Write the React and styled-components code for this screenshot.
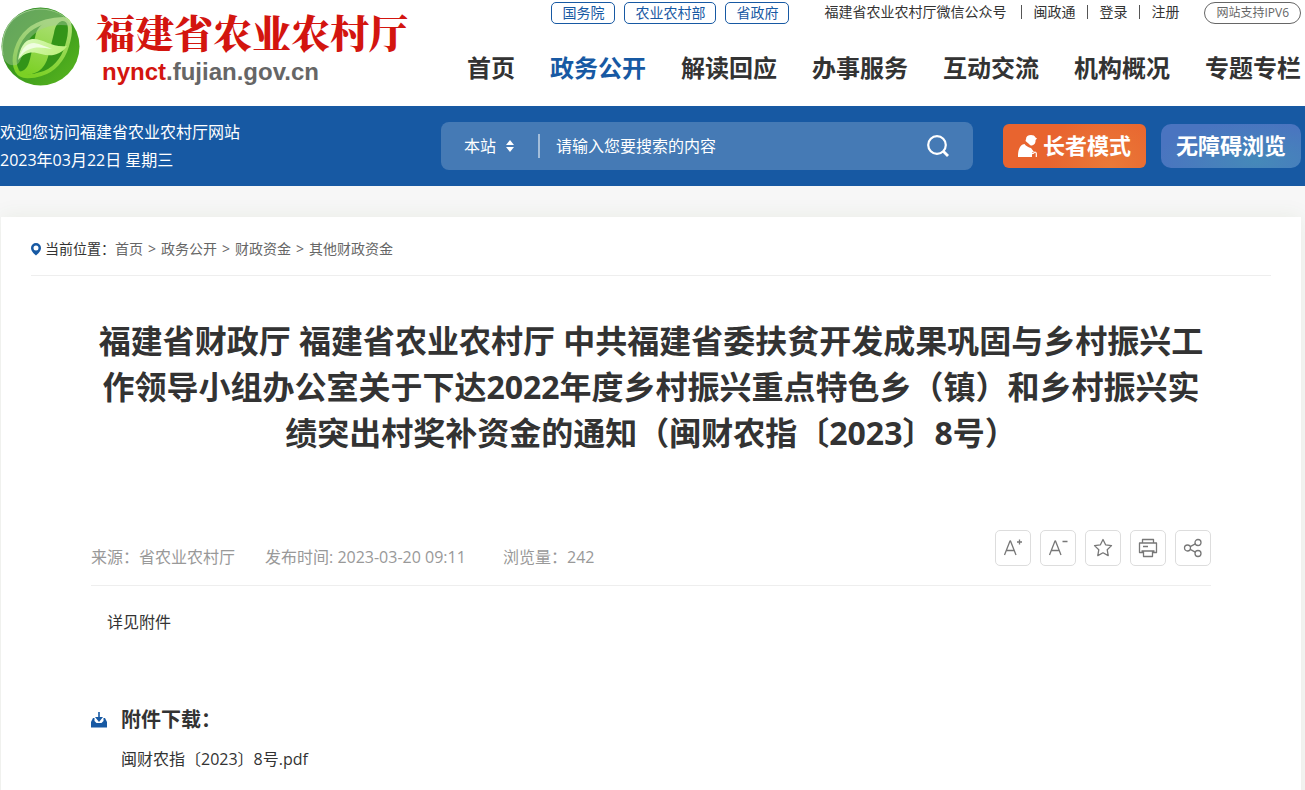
import React, { useState } from 'react';
import styled, { createGlobalStyle } from 'styled-components';

const officialLinks = ['国务院', '农业农村部', '省政府'];
const userLinks = ['福建省农业农村厅微信公众号', '闽政通', '登录', '注册'];
const navItems = ['首页', '政务公开', '解读回应', '办事服务', '互动交流', '机构概况', '专题专栏'];
const crumbs = ['首页', '政务公开', '财政资金', '其他财政资金'];

const Logo = () => (
  <svg width="80" height="80" viewBox="0 0 80 80" aria-hidden="true">
    <defs>
      <linearGradient id="ball" x1="0" y1="0" x2="1" y2="1">
        <stop offset="0" stopColor="#2b8427" />
        <stop offset="0.5" stopColor="#3a9a1c" />
        <stop offset="1" stopColor="#5cb81f" />
      </linearGradient>
      <linearGradient id="band" x1="0.6" y1="0" x2="0.3" y2="1">
        <stop offset="0" stopColor="#aadf72" />
        <stop offset="1" stopColor="#7bd024" />
      </linearGradient>
      <linearGradient id="leaf" x1="0" y1="0" x2="1" y2="0.4">
        <stop offset="0" stopColor="#dcfac0" />
        <stop offset="1" stopColor="#bdf07c" />
      </linearGradient>
    </defs>
    <circle cx="40.5" cy="39.5" r="39" fill="url(#ball)" />
    <path d="M18 60c-6-10 0-26 12-36 10-8 24-12 34-12 8 0 7 14 3 26-4 13-14 25-26 28-9 3-19 3-23-6Z" fill="#2f9217" opacity="0.7" />
    <path d="M17 64c-6-12 0-31 12-41 10-8 24-11 34-11 9 0 8 14 4 27-4 14-14 25-26 28-9 3-20 4-24-3Z" fill="none" stroke="url(#band)" strokeWidth="4" />
    <path d="M36 26c4-9 12-15 28-13-7 2-9 7-10 13l-6 24c-3 10-9 18-25 18-3 0-5-1-6-3 8 0 11-5 13-13Z" fill="url(#band)" />
    <path d="M2 46C-1 21 15 2 40 2c14 0 25 6 32 17-16-3-30 0-40 10-10 10-9 27-16 29-8 2-13-5-14-12Z" fill="#a6c8a0" opacity="0.45" />
    <path d="M3 48C-1 22 15 3 40 2c14 0 25 6 31 15" fill="none" stroke="#b5dca5" strokeWidth="1" opacity="0.7" />
    <path d="M18 53c2-12 6-20 14-21 11-1 20 9 35 7-6 9-16 11-26 8-9-3-16-2-23 6Z" fill="url(#leaf)" />
    <path d="M19 51c3-10 8-15 15-15 7 1 12 4 18 6-12-2-24-4-33 9Z" fill="#effde0" />
  </svg>
);

const ElderIcon = () => (
  <svg width="19" height="22" viewBox="0 0 19 22" fill="#fff" aria-hidden="true">
    <path d="M8 4c0-2.500 2-4 5-4 2 0 4 .8 4.500 2.500L19 3.500 17.600 5c.2 3-1.200 5-3.600 5.500-1.500 0-2-.5-3-1.500L7.500 6Z" />
    <path d="M6.500 9C8 11 10.500 12.500 13 13l3 4-2 .5V22H0c0-6 1-12 6.500-13Z" />
    <path d="M13.500 18.500c1.500.2 2.500-.2 3-1.300 1-.3 1.800.3 1.800 1.300V22" fill="none" stroke="#fff" strokeWidth="1.2" />
  </svg>
);

const SearchIcon = () => (
  <svg width="22" height="22" viewBox="0 0 22 22" fill="none" stroke="#fff" strokeWidth="2.2" aria-hidden="true">
    <circle cx="10" cy="10" r="8.800" />
    <path d="M16 16l5 5" strokeWidth="2.8" />
  </svg>
);

const PinIcon = () => (
  <svg width="10" height="13" viewBox="0 0 10 13" fill="#1759a3" aria-hidden="true">
    <path fillRule="evenodd" d="M5 0a5 5 0 0 1 5 5c0 3-3 6-5 7.500C3 11 0 8 0 5a5 5 0 0 1 5-5Zm0 2.500a2.500 2.500 0 1 0 0 5 2.500 2.500 0 0 0 0-5Z" />
  </svg>
);

const DownloadIcon = () => (
  <svg width="16" height="16" viewBox="0 0 16 16" fill="#1759a3" aria-hidden="true">
    <path d="M7.200 0h1.600v5h3.200L8 10 4 5h3.200Z" />
    <path d="M2 6h1.500v3L5.500 11h5l2-2V6H14l2 4v5.500H0V10Z" />
  </svg>
);

const toolPaths = {
  '增大字号': <path d="M1.500 17 7 3h.5L13 17M3.500 12.500h7.500M14 4h5M16.500 1.500v5" />,
  '减小字号': <path d="M1.500 17 7 3h.5L13 17M3.500 12.500h7.500M14.500 3.500h5" />,
  '收藏': <path d="M10 1.500l2.600 5.300 5.900.8-4.300 4.100 1 5.900L10 14.800l-5.200 2.800 1-5.900L1.500 7.600l5.900-.8Z" />,
  '打印': <path d="M4.500 5V1.500h11V5M5.500 14.500h-4V5h17v9.500h-4M5.500 13h9v5.500h-9ZM3.500 13h13M5 8.500h5" />,
  '分享': (
    <g>
      <circle cx="4.500" cy="10" r="3" />
      <circle cx="15" cy="4.500" r="3" />
      <circle cx="15" cy="15.500" r="3" />
      <path d="M7.200 8.600l5.100-2.700M7.200 11.400l5.100 2.700" />
    </g>
  ),
};

const App = () => {
  const [keyword, setKeyword] = useState('');

  return (
    <>
      <GlobalStyle />
      <Header>
        <Brand href="#">
          <Logo />
          <BrandText>
            <BrandName>福建省农业农村厅</BrandName>
            <BrandDomain><em>nynct</em>.fujian.gov.cn</BrandDomain>
          </BrandText>
        </Brand>
        <HeaderRight>
          <TopLinks>
            <Pills>
              {officialLinks.map((item) => <Pill href="#" key={item}>{item}</Pill>)}
            </Pills>
            <UserLinks>
              {userLinks.map((item) => <UserLink key={item}><a href="#">{item}</a></UserLink>)}
            </UserLinks>
            <Pill href="#" $round>网站支持IPV6</Pill>
          </TopLinks>
          <Nav>
            {navItems.map((item) => (
              <NavLink href="#" key={item} $active={item === '政务公开'}>{item}</NavLink>
            ))}
          </Nav>
        </HeaderRight>
      </Header>

      <Bar>
        <Welcome>
          欢迎您访问福建省农业农村厅网站<br />
          2023年03月22日 星期三
        </Welcome>
        <Search onSubmit={(e) => e.preventDefault()}>
          <Scope>
            <ScopeSelect aria-label="搜索范围">
              <option>本站</option>
            </ScopeSelect>
            <svg width="8" height="12" viewBox="0 0 8 12" fill="#fff" aria-hidden="true">
              <path d="M4 0l4 5H0ZM4 12l4-5H0Z" />
            </svg>
          </Scope>
          <SearchInput
            type="text"
            aria-label="搜索内容"
            placeholder="请输入您要搜索的内容"
            value={keyword}
            onChange={(e) => setKeyword(e.target.value)}
          />
          <SearchButton type="submit" aria-label="搜索"><SearchIcon /></SearchButton>
        </Search>
        <Modes>
          <ModeButton type="button" $elder><ElderIcon />长者模式</ModeButton>
          <ModeButton type="button">无障碍浏览</ModeButton>
        </Modes>
      </Bar>

      <Main>
        <Card>
          <Breadcrumb>
            <PinIcon />
            <Crumbs>
              当前位置：
              {crumbs.map((item, key) => (
                <React.Fragment key={item}>
                  {key > 0 && <Arrow>&gt;</Arrow>}
                  <a href="#">{item}</a>
                </React.Fragment>
              ))}
            </Crumbs>
          </Breadcrumb>
          <Article>
            <Title>
              福建省财政厅 福建省农业农村厅 中共福建省委扶贫开发成果巩固与乡村振兴工作领导小组办公室关于下达2022年度乡村振兴重点特色乡（镇）和乡村振兴实绩突出村奖补资金的通知（闽财农指〔2023〕8号）
            </Title>
            <Meta>
              <MetaItems>
                <span>来源：省农业农村厅</span>
                <PublishTime>发布时间: 2023-03-20 09:11</PublishTime>
                <span>浏览量：242</span>
              </MetaItems>
              <Tools>
                {Object.keys(toolPaths).map((name) => (
                  <ToolButton type="button" aria-label={name} key={name}>
                    <svg width="20" height="20" viewBox="0 0 20 20" fill="none" stroke="#777" strokeWidth="1.3" strokeLinejoin="round">
                      {toolPaths[name]}
                    </svg>
                  </ToolButton>
                ))}
              </Tools>
            </Meta>
            <Content>详见附件</Content>
            <Attachments>
              <AttachmentTitle><DownloadIcon />附件下载：</AttachmentTitle>
              <AttachmentLink href="#">闽财农指〔2023〕8号.pdf</AttachmentLink>
            </Attachments>
          </Article>
        </Card>
      </Main>
    </>
  );
};

export default App;

const GlobalStyle = createGlobalStyle`
  * {
    box-sizing: border-box;
  }
  body {
    background: #f7f7f7;
    color: #333;
    font-family: "Open Sans", "Noto Sans CJK SC", sans-serif;
    font-size: 16px;
    margin: 0;
  }
  a {
    color: inherit;
    text-decoration: none;
  }
  button, input, select {
    background: none;
    border: 0;
    color: inherit;
    font: inherit;
    outline: none;
    padding: 0;
  }
`

const Header = styled.header`
  background: #fff;
  display: flex;
  height: 106px;
  justify-content: space-between;
  padding-right: 4px;
`

const Brand = styled.a`
  display: flex;
  gap: 16px;
  padding-top: 7px;
`

const BrandText = styled.div`
  white-space: nowrap;
`

const BrandName = styled.div`
  color: #d3150f;
  font-family: "Noto Serif CJK SC", "Noto Sans CJK SC", serif;
  font-size: 39px;
  font-weight: 900;
  line-height: 48px;
`

const BrandDomain = styled.div`
  color: #666;
  font-family: "Liberation Sans", Arial, sans-serif;
  font-size: 24px;
  font-weight: 700;
  line-height: 34px;
  padding-left: 6px;

  em {
    color: #d3150f;
    font-style: normal;
  }
`

const HeaderRight = styled.div`
  align-items: flex-end;
  display: flex;
  flex-direction: column;
  white-space: nowrap;
`

const TopLinks = styled.div`
  display: flex;
  font-size: 14px;
  padding-top: 2px;
`

const Pills = styled.div`
  display: flex;
  gap: 9px;
  margin-right: 35px;
`

const Pill = styled.a`
  border: 1px solid ${({ $round }) => ($round ? '#666' : '#1759a3')};
  border-radius: ${({ $round }) => ($round ? '11px' : '5px')};
  color: ${({ $round }) => ($round ? '#666' : '#1759a3')};
  font-size: ${({ $round }) => ($round ? '12px' : '14px')};
  height: 22px;
  line-height: 20px;
  padding: 0 ${({ $round }) => ($round ? '11px' : '10px')};
`

const UserLinks = styled.ul`
  display: flex;
  line-height: 20px;
  list-style: none;
  margin: 0 25px 0 0;
  padding: 0;
`

const UserLink = styled.li`
  align-items: center;
  display: flex;
  height: 20px;

  &:first-child {
    margin-right: 3px;
  }

  & + &::before {
    background: #555;
    content: '';
    height: 14px;
    margin: 0 11px 0 12px;
    width: 1px;
  }
`

const Nav = styled.nav`
  display: flex;
  gap: 35px;
  padding-top: 26px;
`

const NavLink = styled.a`
  color: ${({ $active }) => ($active ? '#1759a3' : '#333')};
  font-size: 24px;
  font-weight: 700;
  line-height: 36px;
`

const Bar = styled.div`
  align-items: center;
  background: #1759a3;
  color: #fff;
  display: flex;
  height: 80px;
  padding-right: 4px;
`

const Welcome = styled.div`
  flex: 1;
  line-height: 28px;
  white-space: nowrap;
`

const Search = styled.form`
  align-items: center;
  background: rgba(255,255,255,.2);
  border-radius: 8px;
  display: flex;
  height: 48px;
  margin-right: 30px;
  padding: 0 24px 0 23px;
  width: 532px;
`

const Scope = styled.div`
  align-items: center;
  border-right: 2px solid rgba(255,255,255,.5);
  display: flex;
  height: 24px;
  padding-right: 24px;
`

const ScopeSelect = styled.select`
  appearance: none;
  width: 42px;
`

const SearchInput = styled.input`
  flex: 1;
  min-width: 0;
  padding-left: 16px;

  &::placeholder {
    color: #fff;
    opacity: 1;
  }
`

const SearchButton = styled.button`
  cursor: pointer;
  display: flex;
`

const Modes = styled.div`
  display: flex;
  gap: 15px;
`

const ModeButton = styled.button`
  align-items: center;
  background: ${({ $elder }) => ($elder
    ? 'radial-gradient(circle at 75% 100%, #ea7a38, #e8642f 55%)'
    : 'radial-gradient(ellipse at 68% 85%, #4589b9, #4a74c0 75%)')};
  border-radius: ${({ $elder }) => ($elder ? '6px' : '10px')};
  cursor: pointer;
  display: flex;
  font-size: 22px;
  font-weight: 700;
  gap: 6px;
  height: 44px;
  padding: 0 15px 4px;
  white-space: nowrap;

  svg {
    margin-top: 4px;
  }
`

const Main = styled.main`
  overflow: hidden;
  padding: 31px 4px 0 1px;
`

const Card = styled.div`
  background: #fff;
  box-shadow: 0 0 20px rgba(60,100,30,.08);
  padding: 0 30px 40px;
`

const Breadcrumb = styled.nav`
  align-items: center;
  border-bottom: 1px solid #eee;
  display: flex;
  font-size: 14px;
  gap: 4px;
  height: 59px;
  padding-top: 6px;
`

const Crumbs = styled.div`
  line-height: 20px;

  a {
    color: #666;
  }
`

const Arrow = styled.i`
  color: #666;
  font-style: normal;
  padding: 0 5px;
`

const Article = styled.article`
  padding: 42px 60px 0;
`

const Title = styled.h1`
  font-size: 32px;
  font-weight: 700;
  line-height: 46px;
  margin: 0;
  text-align: center;
`

const Meta = styled.div`
  align-items: flex-end;
  border-bottom: 1px solid #eee;
  color: #999;
  display: flex;
  justify-content: space-between;
  margin-top: 74px;
  padding-bottom: 19px;
`

const MetaItems = styled.div`
  display: flex;
  gap: 30px;
  line-height: 18px;
`

const PublishTime = styled.span`
  min-width: 208px;
`

const Tools = styled.div`
  display: flex;
  gap: 9px;
`

const ToolButton = styled.button`
  align-items: center;
  border: 1px solid #ddd;
  border-radius: 5px;
  cursor: pointer;
  display: flex;
  height: 36px;
  justify-content: center;
  width: 36px;
`

const Content = styled.p`
  line-height: 32px;
  margin: 20px 0 0;
  padding-left: 16px;
`

const Attachments = styled.section`
  margin-top: 62px;
`

const AttachmentTitle = styled.h2`
  align-items: center;
  display: flex;
  font-size: 20px;
  gap: 14px;
  line-height: 40px;
  margin: 0;
`

const AttachmentLink = styled.a`
  display: block;
  line-height: 38px;
  padding-left: 30px;
`
